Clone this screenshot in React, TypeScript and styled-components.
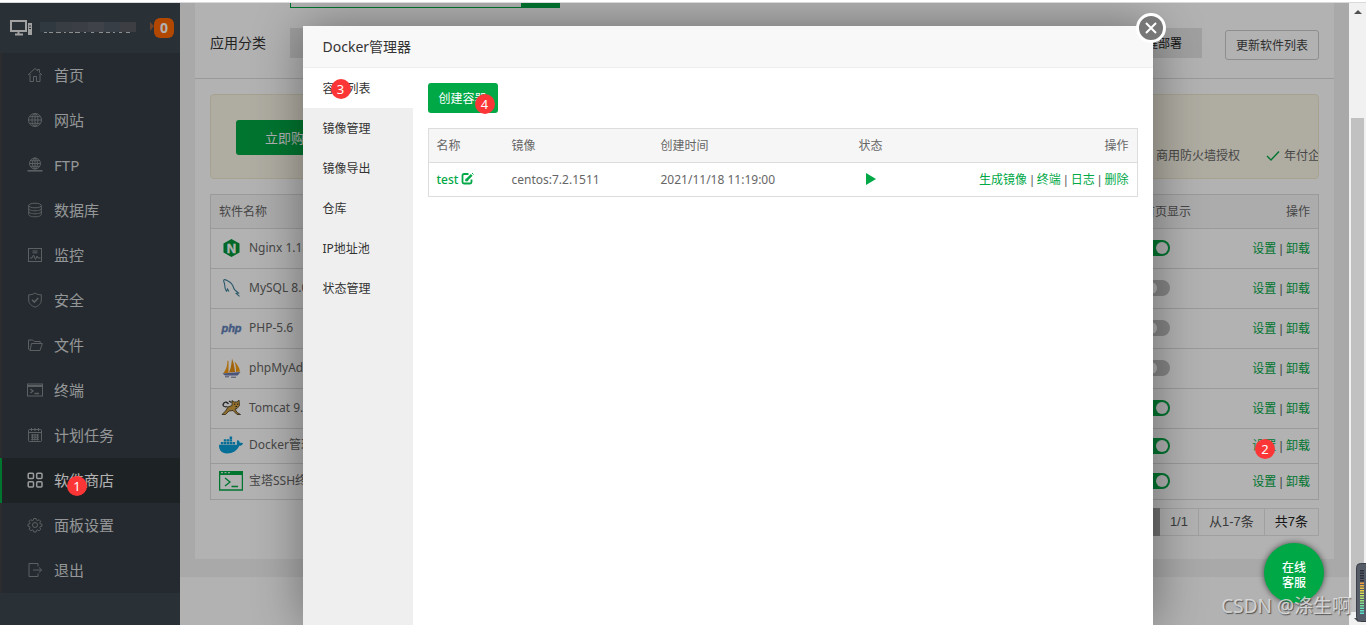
import React from 'react';
import styled, { createGlobalStyle, css } from 'styled-components';
import { FaDocker } from 'react-icons/fa';

const GlobalStyle = createGlobalStyle`
  * { box-sizing: border-box; }
  html, body, #root { height: 100%; margin: 0; }
  body {
    overflow: hidden;
    background: #fff;
    color: #666;
    font: 12px/20px "Noto Sans", "Noto Sans CJK SC", sans-serif;
  }
  a { text-decoration: none; }
  button, input { font: inherit; }
`;

const GREEN = '#00a846';

/* ---------- shell ---------- */
const Shell = styled.div`
  height: 100%;
  display: flex;
  flex-direction: column;
  padding-top: 2px;
`;
const Frame = styled.div`
  flex: 1;
  min-height: 0;
  display: flex;
  position: relative;
  border-top: 1px solid #d9d9db;
`;
const Workspace = styled.div`
  flex: 1;
  min-width: 0;
  display: flex;
  position: relative;
  overflow: hidden;
`;

/* ---------- sidebar ---------- */
const Sidebar = styled.aside`
  flex: 0 0 180px;
  background: #3c454e;
`;
const Host = styled.header`
  display: flex;
  align-items: center;
  height: 50px;
  padding: 0 6px 0 10px;
`;
const HostAddress = styled.svg`
  margin-left: 7px;
  flex: 1;
`;
const MessageCount = styled.button`
  width: 20px;
  height: 20px;
  padding: 0;
  border: 0;
  border-radius: 6px;
  background: #ff6600;
  color: #fff;
  font-weight: 700;
  font-size: 14px;
  line-height: 20px;
`;
const Menu = styled.nav`
  background: #343d44;
`;
const MenuLink = styled.a<{ $active?: boolean }>`
  display: flex;
  align-items: center;
  gap: 11px;
  height: 45px;
  padding: 0 0 2px 25px;
  border-left: 2px solid ${p => (p.$active ? GREEN : '#3f3f42')};
  background: ${p => (p.$active ? '#2a3136' : 'transparent')};
  color: ${p => (p.$active ? '#fff' : '#d6d7d9')};
  font-size: 15px;
  svg { color: ${p => (p.$active ? '#e0e0e0' : '#848a8e')}; }
`;

/* ---------- main page ---------- */
const Main = styled.main`
  flex: 1;
  min-width: 0;
  display: flex;
  flex-direction: column;
  background: #f2f2f2;
`;
const Panel = styled.section`
  margin: 0 15px 18px;
  padding-bottom: 23px;
  background: #fff;
`;
const Footer = styled.footer`
  flex: 1;
  background: #fff;
`;
const SearchRow = styled.div`
  display: flex;
  height: 5px;
  padding-left: 95px;
`;
const SearchField = styled.div`
  width: 231px;
  border: solid ${GREEN};
  border-width: 0 0 1px 1px;
`;
const SearchButton = styled.div`
  width: 39px;
  background: ${GREEN};
`;
const FilterRow = styled.div`
  display: flex;
  align-items: flex-start;
  padding: 20px 15px 18px;
  border-bottom: 1px solid #ddd;
`;
const FilterLabel = styled.span`
  width: 80px;
  color: #333;
  font-size: 14px;
  line-height: 30px;
`;
const Categories = styled.div`
  flex: 1;
  display: flex;
  justify-content: flex-end;
  margin-right: 23px;
  background: #e6e6e6;
`;
const Category = styled.button`
  height: 30px;
  padding: 2px 20px 0;
  border: 0;
  background: none;
  color: #222;
`;
const OutlineButton = styled.button`
  height: 30px;
  margin-top: 2px;
  padding: 1px 10px 0;
  border: 1px solid #ccc;
  border-radius: 3px;
  background: #fff;
  color: #444;
`;
const Banner = styled.div`
  display: flex;
  align-items: center;
  height: 85px;
  margin: 15px;
  padding: 2px 0 0 25px;
  border: 1px solid #efe9cf;
  border-radius: 4px;
  background: #fbf7e8;
  overflow: hidden;
`;
const BuyButton = styled.button`
  flex: none;
  height: 35px;
  padding: 0 29px;
  border: 0;
  border-radius: 3px;
  background: ${GREEN};
  color: #fff;
  font-size: 13px;
`;
const Features = styled.ul`
  display: flex;
  gap: 26px;
  width: 180px;
  margin: 36px 0 0 auto;
  padding: 0;
  list-style: none;
  white-space: nowrap;
  li { flex: none; display: flex; align-items: center; gap: 4px; }
`;

/* ---------- tables ---------- */
const Table = styled.table`
  width: 100%;
  border: 1px solid #ddd;
  border-collapse: separate;
  border-spacing: 0;
  table-layout: fixed;
  background: #fff;
  tbody tr:last-child td { border-bottom: 0; }
`;
const cell = css<{ $align?: string; $w?: number; $h?: number }>`
  width: ${p => (p.$w ? `${p.$w}px` : 'auto')};
  height: ${p => p.$h ?? 34}px;
  padding: 0 8px;
  border-bottom: 1px solid #ddd;
  text-align: ${p => p.$align ?? 'left'};
  white-space: nowrap;
  font-weight: 400;
`;
const Th = styled.th`${cell} background: #f6f6f6;`;
const Td = styled.td`${cell}`;
const TableArea = styled.div`
  padding: 0 15px;
`;
const Software = styled.div`
  display: flex;
  align-items: center;
  gap: 6px;
  padding-bottom: 2px;
  svg { flex: none; }
`;
const ActionLink = styled.a`
  color: ${GREEN};
`;
const Separator = styled.span`
  font-family: "Liberation Sans", sans-serif;
  white-space: pre;
`;
const Toggle = styled.input`
  appearance: none;
  display: block;
  width: 27px;
  height: 16px;
  margin: 0 0 1px;
  padding: 2px;
  border-radius: 8px;
  background: #c0c0c0;
  &::before {
    content: '';
    display: block;
    width: 12px;
    height: 12px;
    border-radius: 50%;
    background: #fff;
  }
  &:checked { background: ${GREEN}; }
  &:checked::before { margin-left: auto; }
`;
const Pager = styled.div`
  display: flex;
  justify-content: flex-end;
  margin-top: 8px;
  padding: 0 15px;
  color: #555;
  font: 13px/26px "Liberation Sans", "Noto Sans CJK SC", sans-serif;
`;
const PagerCell = styled.span<{ $current?: boolean }>`
  padding: 0 10px;
  border: 1px solid #e5e5e5;
  border-left: 0;
  ${p => p.$current && 'background: #a3a3a3; color: #fff; border-color: #a3a3a3;'}
  &:last-child { color: #222; }
`;

/* ---------- modal ---------- */
const Overlay = styled.div`
  position: absolute;
  inset: 0;
  display: flex;
  justify-content: center;
  padding: 23px 0 0 106px;
  background: rgba(0, 0, 0, 0.3);
`;
const Modal = styled.section`
  position: relative;
  display: flex;
  flex-direction: column;
  width: 850px;
  border-radius: 2px 2px 0 0;
  background: #fff;
  box-shadow: 1px 1px 50px rgba(0, 0, 0, 0.4);
`;
const ModalTitle = styled.h2`
  margin: 0;
  padding: 0 20px;
  border-bottom: 1px solid #eee;
  background: #f8f8f8;
  color: #333;
  font-size: 14px;
  font-weight: 400;
  line-height: 41px;
`;
const CloseButton = styled.button`
  position: absolute;
  top: -13px;
  right: -13px;
  display: grid;
  place-items: center;
  width: 30px;
  height: 30px;
  padding: 0;
  border: 3px solid #fff;
  border-radius: 50%;
  background: #777;
`;
const ModalBody = styled.div`
  flex: 1;
  display: flex;
`;
const Tabs = styled.nav`
  flex: 0 0 110px;
  background: #efefef;
`;
const Tab = styled.a<{ $active?: boolean }>`
  display: block;
  position: relative;
  height: 40px;
  padding: 1px 0 0 20px;
  background: ${p => (p.$active ? '#fff' : 'transparent')};
  color: #333;
  line-height: 40px;
`;
const TabContent = styled.div`
  flex: 1;
  padding: 15px;
`;
const CreateButton = styled.button`
  display: block;
  position: relative;
  height: 30px;
  margin-bottom: 15px;
  padding: 2px 11px 0;
  border: 0;
  border-radius: 3px;
  background: ${GREEN};
  color: #fff;
`;
const ContainerName = styled(ActionLink)`
  display: flex;
  align-items: center;
  gap: 3px;
  font-weight: 500;
  svg { margin-bottom: 2px; }
`;
const Play = styled.svg`
  display: block;
  margin: 0 auto 2px;
`;

/* ---------- things that float over the page ---------- */
const Marker = styled.span`
  position: absolute;
  width: 20px;
  height: 20px;
  border-radius: 50%;
  background: #fc3636;
  color: #fff;
  font: 13px/20px "Noto Sans", sans-serif;
  text-align: center;
`;
const MenuMarker = styled(Marker)`left: 67px; top: 473px;`;
const RowMarker = styled(Marker)`right: 74px; top: 436px;`;
const TabMarker = styled(Marker)`left: 28px; top: 11px;`;
const CreateMarker = styled(Marker)`right: 3px; top: 11px;`;
const Support = styled.a`
  position: absolute;
  right: 25px;
  bottom: 22px;
  width: 60px;
  height: 60px;
  padding: 17px 18px 0;
  border-radius: 50%;
  background: ${GREEN};
  color: #fff;
  font-weight: 500;
  line-height: 15px;
  box-shadow: 0 0 6px rgba(0, 0, 0, 0.6);
`;
const Watermark = styled.span`
  position: absolute;
  right: 15px;
  bottom: 6px;
  color: rgba(225, 225, 225, 0.85);
  font-size: 19px;
  line-height: 26px;
  text-shadow: 1px 1px 1px rgba(60, 60, 60, 0.8);
  white-space: nowrap;
`;
const Scrollbar = styled.div`
  flex: 0 0 17px;
  display: flex;
  flex-direction: column;
  align-items: center;
  padding: 6px 2px 2px;
  background: #f1f1f1;
`;
const Thumb = styled.div`
  flex: 1;
  width: 13px;
  margin: 103px 0 5px;
  background: #c1c1c1;
`;
const Meter = styled.svg`
  position: absolute;
  right: 0;
  bottom: 3px;
`;

/* ---------- icons ---------- */
const menuShapes: Record<string, React.ReactNode> = {
  home: <><path d="M1 8 8 1.5l2.5 2.3V2.5h2v3.2L15 8M3 7v7.5h3.5v-5h3v5H13V7" /></>,
  globe: <><circle cx="8" cy="8" r="6.5" /><ellipse cx="8" cy="8" rx="3" ry="6.5" /><path d="M8 1.5v13M1.5 8h13M2.5 4.7h11M2.5 11.3h11" /></>,
  ftp: <><circle cx="8" cy="6.5" r="5.5" /><ellipse cx="8" cy="6.5" rx="2.5" ry="5.5" /><path d="M8 1v11M2.5 6.5h11M3.4 3.7h9.2M3.4 9.3h9.2" /><path d="M.5 13.8h15" strokeWidth="1.6" /></>,
  database: <><ellipse cx="8" cy="3.5" rx="6.3" ry="2.3" /><path d="M1.7 3.5v9c0 1.3 2.8 2.3 6.3 2.3s6.3-1 6.3-2.3v-9M1.7 6.5c0 1.3 2.8 2.3 6.3 2.3s6.3-1 6.3-2.3M1.7 9.5c0 1.3 2.8 2.3 6.3 2.3s6.3-1 6.3-2.3" /></>,
  monitor: <><rect x="1.5" y="1.5" width="13" height="13" /><path d="M5.5 4h5M5.5 5.8h5M3 11h2l1.5-3 2 4.5L10 9l1 2h2.5" /></>,
  shield: <><path d="M8 1c2 1.4 4 1.8 6.3 1.8V8c0 3.5-2.5 5.8-6.3 7.2C4.2 13.8 1.7 11.5 1.7 8V2.8C4 2.8 6 2.4 8 1Z" /><path d="m5 7.8 2.3 2.3L11.3 6" strokeWidth="1.5" /></>,
  folder: <><path d="M3 13.5 1.5 12V3h4.2l1.5 1.5h6v2M3 13.5h10L15.3 6.5H4.5L3 13.5Z" /></>,
  terminal: <><rect x=".5" y="2" width="15" height="12" /><path d="M.5 4.5h15M.5 3.5h15" /><path d="m3.5 7 2.5 2-2.5 2M7.5 11.5h4.5" strokeWidth="1.3" /></>,
  calendar: <><rect x="1.5" y="2.5" width="13" height="12" rx="1" /><path d="M1.5 5.5h13M4.5 1v3M8 1v3M11.5 1v3M4 8h8M4 10.2h8M4 12.4h8M5.5 7v6.5M8 7v6.5M10.5 7v6.5" /></>,
  store: <g strokeWidth="1.5"><rect x="1.2" y="1.2" width="5.3" height="5.3" rx="1" /><rect x="9.7" y="1.2" width="5.3" height="5.3" rx="1" /><rect x="1.2" y="9.7" width="5.3" height="5.3" rx="1" /><rect x="9.7" y="9.7" width="5.3" height="5.3" rx="1" /></g>,
  gear: <><circle cx="8" cy="8" r="2.5" /><path d="m6.7 1.5-.4 1.7-1 .4-1.6-.9-1.6 1.6.9 1.6-.4 1-1.6.3v2l1.6.4.4 1-.9 1.6 1.6 1.6 1.6-.9 1 .4.4 1.7h2.4l.4-1.7 1-.4 1.6.9 1.6-1.6-.9-1.6.4-1 1.7-.4v-2l-1.7-.3-.4-1 .9-1.6-1.6-1.6-1.6.9-1-.4-.4-1.7Z" /></>,
  exit: <><path d="M11 4.5V1.5H2v13h9v-3M6 8h8.5M12 5.5 14.7 8 12 10.5" /></>,
};

const MenuIcon = ({ name }: { name: string }) => (
  <svg width="16" height="16" viewBox="0 0 16 16" fill="none" stroke="currentColor" aria-hidden="true">
    {menuShapes[name]}
  </svg>
);

const HostIcon = () => (
  <svg width="23" height="18" viewBox="0 0 23 18" fill="none" stroke="#e8e8e8" aria-hidden="true">
    <rect x="1" y="2" width="15" height="10" strokeWidth="2" />
    <path d="M8.5 12v3M5 15.5h8" strokeWidth="2" />
    <path d="M20 4v12" strokeWidth="4" />
    <path d="M19 7h2M19 9.5h2" stroke="#3c454e" />
  </svg>
);

const Svg24 = ({ children }: { children: React.ReactNode }) => (
  <svg width="24" height="20" viewBox="0 0 24 20" aria-hidden="true">{children}</svg>
);

const NginxIcon = () => (
  <Svg24>
    <path d="M12.5 1 20.5 5.5v9l-8 4.5-8-4.5v-9Z" fill="#009639" />
    <text x="12.5" y="14.5" textAnchor="middle" fill="#fff" stroke="#fff" strokeWidth=".4" fontFamily="Liberation Sans" fontWeight="700" fontSize="13">N</text>
  </Svg24>
);
const MysqlIcon = () => (
  <Svg24>
    <path d="M7.5 13.5C5.5 11 6 8 5.5 5.5 4.8 3.5 4 2.5 5 1.8c1.5-.6 2.5.7 3.5 1 3 1.2 5.5 4.5 6.5 8 .6 1.7 2.5 2.3 4.5 4.2l-2.3.3 3.3 3M7.5 13.5l1-2.5 1.5 2.5" fill="none" stroke="#3d7f98" strokeWidth="1.1" />
  </Svg24>
);
const PhpIcon = () => (
  <Svg24>
    <text x="12.5" y="14" textAnchor="middle" fill="#6181b6" stroke="#6181b6" strokeWidth=".4" fontFamily="Liberation Sans" fontWeight="700" fontStyle="italic" fontSize="11">php</text>
  </Svg24>
);
const PmaIcon = () => (
  <Svg24>
    <path d="M8.5 2.5C8.5 8 7 12 4 15.5l5.5-.5V3Z" fill="#f89c0e" />
    <path d="M13 .5c-.5 6-1 9.5-3 14l6-.5C15.5 9 14.5 4 13 .5Z" fill="#e58d10" />
    <path d="M15.5 3.5c1.5 5 1.5 7 1.5 10.5l4-.5C20.5 9.5 18 6 15.5 3.5Z" fill="#f89c0e" />
    <path d="M3.5 15.5 21.5 14l-3 3.5H6Z" fill="#6c78af" />
    <path d="M6 18.8h4M12 19.2h5" stroke="#6c6f95" />
  </Svg24>
);
const TomcatIcon = () => (
  <Svg24>
    <path d="M13 2.5 15 4h3l2-2 .5 5.5-2.5 3-2 .5 2 3.5 3.5 2h-3.5l-4-4-4 .5-3.5 3.5H3l3.5-3.5L9 9l4-1.5Z" fill="#d1a041" stroke="#3f3520" strokeWidth=".8" />
    <path d="M8.5 8.5C5 9.5 3 7.5 4.5 5.5s4-1.5 5 .5M10 3l2.5 1.5" fill="none" stroke="#333" strokeWidth="1.3" />
    <path d="M15 6.2h1.2M18 6.2h1.2M16.5 8.5h1.5" stroke="#222" />
  </Svg24>
);
const SshIcon = () => (
  <Svg24>
    <path d="M0 0h24v4H0Z" fill={GREEN} />
    <path d="M.6 3v16h22.8V3M6 7l5 4-5 4M12.5 15.5H19" fill="none" stroke={GREEN} strokeWidth="1.3" />
    <path d="M2 1.7h2M5.5 1.7h2M9 1.7h2" stroke="#fff" />
  </Svg24>
);

const EditIcon = () => (
  <svg width="13" height="13" viewBox="0 0 13 13" fill="none" stroke={GREEN} aria-hidden="true">
    <path d="M7.5 2H3a1.5 1.5 0 0 0-1.5 1.5V10A1.5 1.5 0 0 0 3 11.5h6A1.5 1.5 0 0 0 10.5 10V7.5" strokeWidth="1.8" />
    <path d="M5.8 7.8 10.7 2.8" strokeWidth="2.4" />
    <path d="m5 6.8-.3 2.2 2.2-.3ZM11 1l1.5 1.5" fill={GREEN} />
  </svg>
);

const Check = () => (
  <svg width="14" height="12" viewBox="0 0 14 12" fill="none" stroke={GREEN} strokeWidth="1.4" aria-hidden="true">
    <path d="m1 6 4 4 8-8.5" />
  </svg>
);

const menu: [string, string][] = [
  ['home', '首页'], ['globe', '网站'], ['ftp', 'FTP'], ['database', '数据库'],
  ['monitor', '监控'], ['shield', '安全'], ['folder', '文件'], ['terminal', '终端'],
  ['calendar', '计划任务'], ['store', '软件商店'], ['gear', '面板设置'], ['exit', '退出'],
];

const software: { name: string; icon: React.ReactNode; shown: boolean; height: number }[] = [
  { name: 'Nginx 1.18', icon: <NginxIcon />, shown: true, height: 40 },
  { name: 'MySQL 8.0', icon: <MysqlIcon />, shown: false, height: 40 },
  { name: 'PHP-5.6', icon: <PhpIcon />, shown: false, height: 40 },
  { name: 'phpMyAdmin', icon: <PmaIcon />, shown: false, height: 40 },
  { name: 'Tomcat 9.0', icon: <TomcatIcon />, shown: true, height: 40 },
  { name: 'Docker管理器', icon: <FaDocker size={24} color="#0a9fd8" />, shown: true, height: 35 },
  { name: '宝塔SSH终端', icon: <SshIcon />, shown: true, height: 35 },
];

const tabs = ['容器列表', '镜像管理', '镜像导出', '仓库', 'IP地址池', '状态管理'];

const Actions = ({ items }: { items: string[] }) => (
  <>
    {items.map((item, i) => (
      <React.Fragment key={item}>
        {i > 0 && <Separator> | </Separator>}
        <ActionLink href="#">{item}</ActionLink>
      </React.Fragment>
    ))}
  </>
);

const mosaic = ['#46525b', '#515860', '#555b63', '#5c5f69', '#4f5a63', '#565a60'];
const meterColors = ['#2c2f3a', '#2c2f3a', '#2c2f3a', '#2c2f3a', '#2c2f3a', '#f0a040', '#efb040', '#ecc23e', '#e6d044', '#d8dc50', '#c4e060', '#aee070', '#98e07c', '#84e08c', '#74e09c', '#66e0b0', '#5ce0c0', '#58e0cc'];

export default function App() {
  return (
    <Shell>
      <GlobalStyle />
      <Frame>
        <Workspace>
          <Sidebar>
            <Host>
              <HostIcon />
              <HostAddress height="16" viewBox="0 0 114 16" preserveAspectRatio="xMinYMid meet" aria-hidden="true">
                {mosaic.map((c, i) => <rect key={i} x={i * 16} y="2" width="16" height="10" fill={c} />)}
                <path d="M4 12.5h3M9 12.5h4M16 12.5h5M24 12.5h2M29 12.5h4M35 12.5h5M44 12.5h2M51 12.5h3M59 12.5h4M66 12.5h4M73 12.5h2M79 12.5h3M86 12.5h4" stroke="#c9cccf" />
                <path d="M110 2l4 4-4 5Z" fill="#a3613a" />
              </HostAddress>
              <MessageCount type="button">0</MessageCount>
            </Host>
            <Menu>
              {menu.map(([icon, label]) => (
                <MenuLink key={label} href="#" $active={icon === 'store'}>
                  <MenuIcon name={icon} />{label}
                </MenuLink>
              ))}
            </Menu>
          </Sidebar>

          <Main>
            <Panel>
              <SearchRow><SearchField /><SearchButton /></SearchRow>
              <FilterRow>
                <FilterLabel>应用分类</FilterLabel>
                <Categories><Category type="button">一键部署</Category></Categories>
                <OutlineButton type="button">更新软件列表</OutlineButton>
              </FilterRow>
              <Banner>
                <BuyButton type="button">立即购买</BuyButton>
                <Features>
                  <li><Check />商用防火墙授权</li>
                  <li><Check />年付企业版</li>
                </Features>
              </Banner>
              <TableArea>
                <Table>
                  <thead>
                    <tr>
                      <Th $w={924}>软件名称</Th>
                      <Th $w={84}>首页显示</Th>
                      <Th $align="right">操作</Th>
                    </tr>
                  </thead>
                  <tbody>
                    {software.map(s => (
                      <tr key={s.name}>
                        <Td $h={s.height}><Software>{s.icon}{s.name}</Software></Td>
                        <Td $h={s.height}><Toggle type="checkbox" aria-label={s.name} defaultChecked={s.shown} /></Td>
                        <Td $h={s.height} $align="right"><Actions items={['设置', '卸载']} /></Td>
                      </tr>
                    ))}
                  </tbody>
                </Table>
              </TableArea>
              <Pager>
                <PagerCell $current>1</PagerCell>
                <PagerCell>1/1</PagerCell>
                <PagerCell>从1-7条</PagerCell>
                <PagerCell>共7条</PagerCell>
              </Pager>
            </Panel>
            <Footer />
          </Main>

          <Overlay>
            <Modal role="dialog" aria-label="Docker管理器">
              <ModalTitle>Docker管理器</ModalTitle>
              <CloseButton type="button" aria-label="关闭">
                <svg width="12" height="12" viewBox="0 0 12 12" stroke="#fff" strokeWidth="2" aria-hidden="true">
                  <path d="m1 1 10 10M11 1 1 11" />
                </svg>
              </CloseButton>
              <ModalBody>
                <Tabs>
                  {tabs.map((t, i) => (
                    <Tab key={t} href="#" $active={i === 0}>{t}{i === 0 && <TabMarker>3</TabMarker>}</Tab>
                  ))}
                </Tabs>
                <TabContent>
                  <CreateButton type="button">创建容器<CreateMarker>4</CreateMarker></CreateButton>
                  <Table>
                    <thead>
                      <tr>
                        <Th $w={75}>名称</Th>
                        <Th $w={149}>镜像</Th>
                        <Th $w={150}>创建时间</Th>
                        <Th $w={136} $align="center">状态</Th>
                        <Th $align="right">操作</Th>
                      </tr>
                    </thead>
                    <tbody>
                      <tr>
                        <Td $h={33}><ContainerName href="#">test<EditIcon /></ContainerName></Td>
                        <Td $h={33}>centos:7.2.1511</Td>
                        <Td $h={33}>2021/11/18 11:19:00</Td>
                        <Td $h={33}>
                          <Play width="10" height="12" viewBox="0 0 10 12" fill={GREEN} aria-label="运行中"><path d="M0 0 10 6 0 12Z" /></Play>
                        </Td>
                        <Td $h={33} $align="right"><Actions items={['生成镜像', '终端', '日志', '删除']} /></Td>
                      </tr>
                    </tbody>
                  </Table>
                </TabContent>
              </ModalBody>
            </Modal>
          </Overlay>

          <MenuMarker>1</MenuMarker>
          <RowMarker>2</RowMarker>
          <Support href="#">在线客服</Support>
        </Workspace>

        <Scrollbar>
          <svg width="8" height="6" viewBox="0 0 8 6" aria-hidden="true"><path d="M4 1 8 5H0Z" fill="#505050" /></svg>
          <Thumb />
          <svg width="8" height="6" viewBox="0 0 8 6" aria-hidden="true"><path d="M0 1h8L4 5Z" fill="#505050" /></svg>
        </Scrollbar>
        <Watermark>CSDN @涤生啊</Watermark>
        <Meter width="10" height="59" viewBox="0 0 10 59" aria-hidden="true">
          <rect x=".5" y=".5" width="14" height="58" rx="4" fill="#565b68" stroke="#3a3e49" />
          {meterColors.map((c, i) => <rect key={i} x="4" y={7 + i * 2.5} width="4" height="1.5" fill={c} />)}
        </Meter>
      </Frame>
    </Shell>
  );
}
